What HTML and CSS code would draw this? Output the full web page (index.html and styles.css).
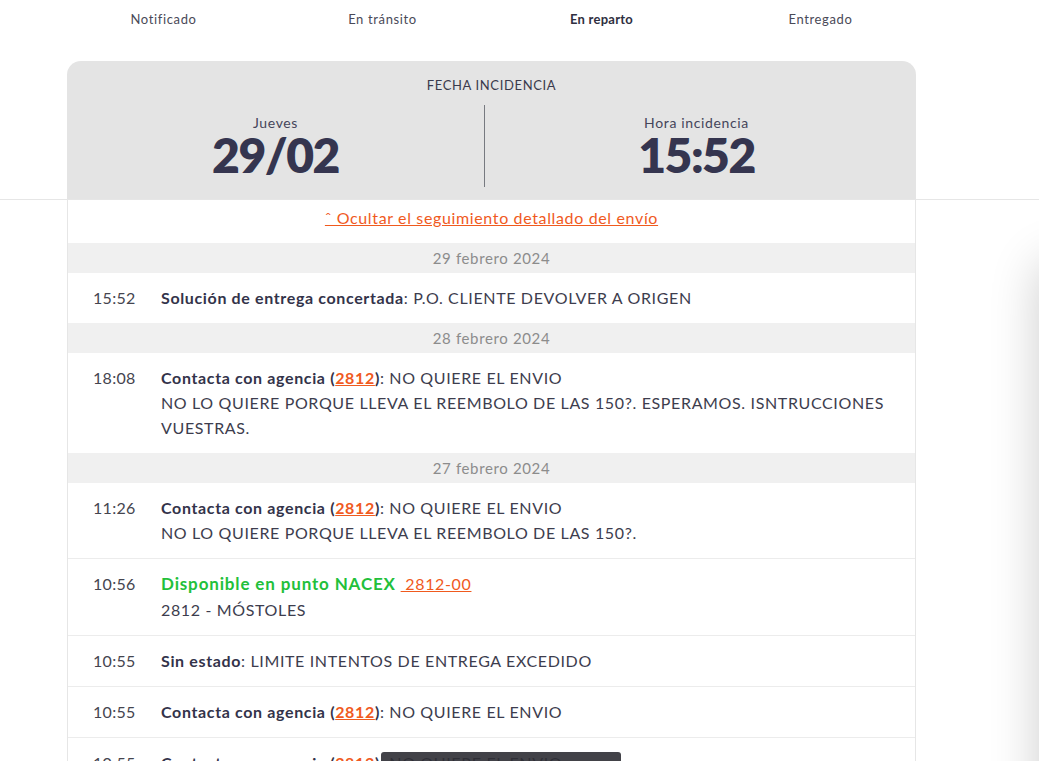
FILE: index.html
```html
<!DOCTYPE html>
<html lang="es">
<head>
<meta charset="utf-8">
<title>Seguimiento del envío</title>
<link rel="stylesheet" href="styles.css">
</head>
<body>
<header class="top">
  <nav class="steps">
    <span class="step">Notificado</span>
    <span class="step">En tránsito</span>
    <span class="step step-active">En reparto</span>
    <span class="step">Entregado</span>
  </nav>
  <div class="wrap">
    <section class="card-head">
      <div class="head-title">FECHA INCIDENCIA</div>
      <div class="head-cols">
        <div class="head-col head-col-left">
          <div class="head-label">Jueves</div>
          <div class="head-value">29/02</div>
        </div>
        <div class="head-col head-col-right">
          <div class="head-label">Hora incidencia</div>
          <div class="head-value">15:52</div>
        </div>
      </div>
    </section>
  </div>
</header>
<main class="wrap">
  <section class="card-body">
    <div class="toggle-row"><a class="toggle" href="#">ˆ Ocultar el seguimiento detallado del envío</a></div>

    <div class="day">29 febrero 2024</div>
    <div class="ev ev-last">
      <span class="ev-time">15:52</span>
      <div class="ev-desc"><b>Solución de entrega concertada</b>: P.O. CLIENTE DEVOLVER A ORIGEN</div>
    </div>

    <div class="day">28 febrero 2024</div>
    <div class="ev ev-last">
      <span class="ev-time">18:08</span>
      <div class="ev-desc"><b>Contacta con agencia (<a class="code" href="#">2812</a>)</b>: NO QUIERE EL ENVIO<br>NO LO QUIERE PORQUE LLEVA EL REEMBOLO DE LAS 150?. ESPERAMOS. ISNTRUCCIONES VUESTRAS.</div>
    </div>

    <div class="day">27 febrero 2024</div>
    <div class="ev">
      <span class="ev-time">11:26</span>
      <div class="ev-desc"><b>Contacta con agencia (<a class="code" href="#">2812</a>)</b>: NO QUIERE EL ENVIO<br>NO LO QUIERE PORQUE LLEVA EL REEMBOLO DE LAS 150?.</div>
    </div>
    <div class="ev">
      <span class="ev-time">10:56</span>
      <div class="ev-desc"><div class="ev-first"><b class="ok">Disponible en punto NACEX</b> <a class="point" href="#">&nbsp;2812-00</a></div>2812 - MÓSTOLES</div>
    </div>
    <div class="ev">
      <span class="ev-time">10:55</span>
      <div class="ev-desc"><b>Sin estado</b>: LIMITE INTENTOS DE ENTREGA EXCEDIDO</div>
    </div>
    <div class="ev">
      <span class="ev-time">10:55</span>
      <div class="ev-desc"><b>Contacta con agencia (<a class="code" href="#">2812</a>)</b>: NO QUIERE EL ENVIO</div>
    </div>
    <div class="ev">
      <span class="ev-time">10:55</span>
      <div class="ev-desc"><b>Contacta con agencia (<a class="code" href="#">2812</a>)</b>: NO QUIERE EL ENVIO</div>
    </div>
  </section>
</main>
<div class="tooltip">"NO QUIERE EL ENVIO"</div>
<aside class="drawer"></aside>
</body>
</html>
```
FILE: styles.css
```css
html, body {
  margin: 0;
  padding: 0;
  background: #ffffff;
}
body {
  font-family: Lato, "Open Sans", "Liberation Sans", sans-serif;
  color: #3d3d4e;
  letter-spacing: 0.04em;
  position: relative;
}
.top {
  border-bottom: 1px solid #e6e6e6;
}
.steps {
  display: grid;
  grid-template-columns: repeat(4, 219px);
  margin-left: 54px;
  height: 38px;
  align-items: center;
  font-size: 13px;
  color: #4a4a58;
}
.step {
  text-align: center;
}
.step-active {
  font-weight: 700;
  color: #2f2f3f;
  letter-spacing: 0.02em;
}
.wrap {
  padding-left: 67px;
}
.card-head {
  width: 849px;
  margin-top: 23px;
  background: #e4e4e4;
  border-radius: 14px 14px 0 0;
  padding: 15px 0 12px;
  box-sizing: border-box;
  height: 138px;
}
.head-title {
  text-align: center;
  font-size: 13px;
  line-height: 18px;
  color: #3a3a4c;
}
.head-cols {
  display: flex;
  margin-top: 11px;
}
.head-col {
  text-align: center;
  padding-top: 9px;
  height: 82px;
  box-sizing: border-box;
}
.head-col-left {
  width: 418px;
  flex: none;
  border-right: 1px solid #777a80;
}
.head-col-right {
  flex: 1;
  padding-right: 8px;
}
.head-label {
  font-size: 14px;
  line-height: 17px;
  color: #45455a;
}
.head-value {
  font-size: 48px;
  line-height: 48px;
  font-weight: 800;
  color: #35354f;
  letter-spacing: -1.5px;
}
.card-body {
  width: 849px;
  box-sizing: border-box;
  border-left: 1px solid #e6e6e6;
  border-right: 1px solid #e6e6e6;
  font-size: 16px;
}
.toggle-row {
  height: 43px;
  box-sizing: border-box;
  padding-top: 8px;
  line-height: 20px;
  text-align: center;
}
.toggle {
  color: #f05a1e;
  text-decoration: underline;
  font-size: 16px;
}
.day {
  background: #f0f0f0;
  height: 30px;
  line-height: 30px;
  text-align: center;
  font-size: 15px;
  color: #8c8c8c;
}
.ev {
  display: flex;
  padding: 12px 0 13px 25px;
  line-height: 25px;
  border-bottom: 1px solid #ececec;
}
.ev-last {
  border-bottom: 0;
}
.ev-time {
  width: 68px;
  flex: none;
  color: #45454f;
  letter-spacing: 0.02em;
}
.ev-desc {
  flex: 1;
  color: #3d3d4e;
  padding-right: 20px;
}
.ev-desc b {
  font-weight: 700;
  color: #33334a;
}
.code {
  color: #f05a1e;
  text-decoration: underline;
}
.ev-first {
  line-height: 26px;
}
.ev-desc b.ok {
  color: #22c03a;
  font-size: 17px;
  letter-spacing: 0.85px;
}
.point {
  color: #f05a1e;
  text-decoration: underline;
}
.tooltip {
  position: absolute;
  left: 381px;
  top: 752px;
  width: 240px;
  height: 40px;
  box-sizing: border-box;
  padding: 7px 10px;
  background: rgba(45, 45, 52, 0.9);
  border-radius: 3px;
  color: #d8d8dc;
  font-size: 15px;
  line-height: 20px;
}
.drawer {
  position: fixed;
  left: 1041px;
  top: 232px;
  width: 300px;
  height: 1000px;
  background: #ffffff;
  border-radius: 14px;
  box-shadow: -2px 30px 50px rgba(0, 0, 0, 0.2);
}
```
